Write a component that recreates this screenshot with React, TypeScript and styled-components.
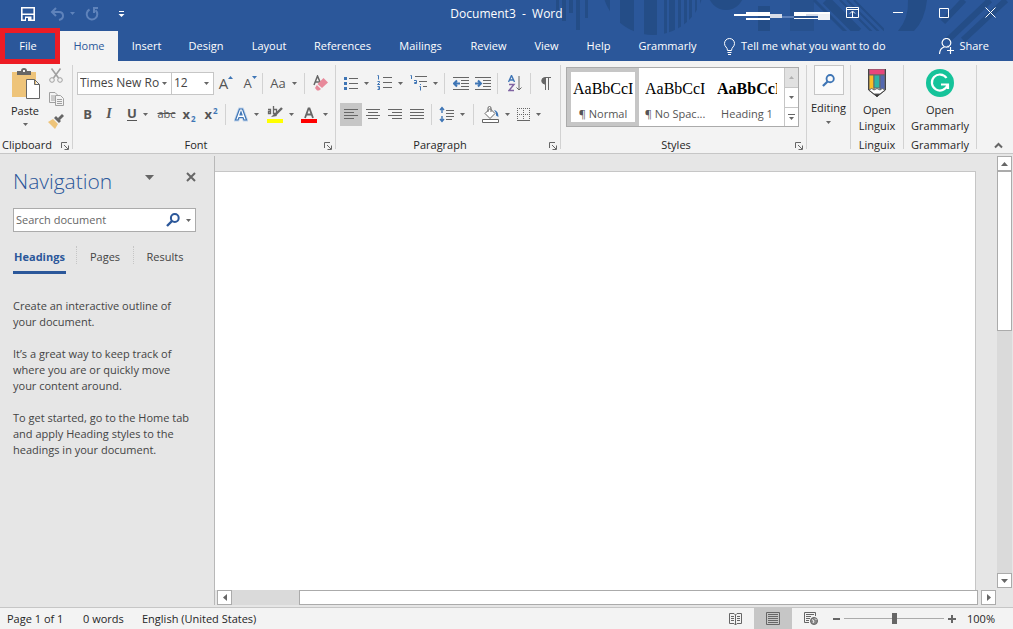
import React from "react";
import styled, { createGlobalStyle, css } from "styled-components";

const Global = createGlobalStyle`
  * { box-sizing: border-box; }
  body { margin: 0; font: 11px/16px "Open Sans", "Noto Sans", sans-serif; color: #262626; background: #e6e6e6; }
  button, input, select { font: inherit; color: inherit; }
  button { border: 0; background: none; padding: 0; cursor: pointer; }
  h1, h2, p { margin: 0; font-weight: 400; }
  svg { display: block; flex: none; }
`;

const BLUE = "#2b579a";
const GREY = "#666";
const ACCENT = "#3e75b5";

const Shell = styled.div`
  min-height: 100vh;
  display: flex;
  flex-direction: column;
`;

/* ---------- title bar and tabs ---------- */
const Header = styled.header`
  position: relative;
  background: ${BLUE};
  color: #fff;
`;
const Pattern = styled.svg`
  position: absolute;
  top: 0;
  right: 0;
`;
const TitleBar = styled.div`
  position: relative;
  height: 31px;
  display: grid;
  grid-template-columns: 1fr auto 1fr;
  align-items: center;
  padding-bottom: 4px;
`;
const QuickAccess = styled.div`
  display: flex;
  align-items: center;
  padding-left: 21px;
`;
const QuickButton = styled.button<{ $w: number; $dim?: boolean }>`
  width: ${(p) => p.$w}px;
  height: 24px;
  display: flex;
  align-items: center;
  gap: 5px;
  color: ${(p) => (p.$dim ? "#5f83bb" : "#fff")};
`;
const Title = styled.h1`
  font-size: 12px;
  white-space: pre;
`;
const WindowControls = styled.div`
  display: flex;
  justify-content: flex-end;
  align-items: center;
  padding-bottom: 2px;
`;
const WindowButton = styled.button`
  width: 46px;
  height: 24px;
  display: grid;
  place-items: center;
  color: #fff;
`;
const TabBar = styled.nav`
  position: relative;
  height: 30px;
  display: flex;
`;
const Tab = styled.button<{ $w: number; $active?: boolean }>`
  width: ${(p) => p.$w}px;
  text-align: center;
  white-space: nowrap;
  color: #fff;
  ${(p) => p.$active && css`background: #f3f3f3; color: ${BLUE};`}
`;
const FileTab = styled(Tab)`
  position: relative;
  padding-right: 4px;
  &::after {
    content: "";
    position: absolute;
    z-index: 2;
    inset: -3px 0 -3px 0;
    border: 5px solid #ed1c24;
  }
`;
const TabAction = styled.button`
  display: flex;
  align-items: center;
  gap: 5px;
  color: #fff;
  padding-left: 12px;
  white-space: nowrap;
`;
const Share = styled(TabAction)`
  margin-left: auto;
  padding-right: 24px;
`;

/* ---------- ribbon ---------- */
const Ribbon = styled.div`
  height: 93px;
  display: flex;
  background: #f3f3f3;
  border-bottom: 1px solid #c6c6c6;
`;
const Group = styled.section<{ $w: number; $pad?: number }>`
  position: relative;
  width: ${(p) => p.$w}px;
  padding-left: ${(p) => p.$pad ?? 0}px;
  padding-right: 1px;
  display: flex;
  flex-direction: column;
  &::after {
    content: "";
    position: absolute;
    right: 0;
    top: 4px;
    bottom: 4px;
    width: 1px;
    background: #d2d2d2;
  }
`;
const GroupBody = styled.div`
  flex: 1;
  display: flex;
  flex-direction: column;
`;
const Tools = styled(GroupBody)`
  padding-top: 11px;
  gap: 9px;
`;
const GroupLabel = styled.div<{ $pad?: number }>`
  height: 16px;
  display: flex;
  align-items: center;
  justify-content: center;
  padding-right: ${(p) => p.$pad ?? 0}px;
`;
const LauncherButton = styled.button`
  position: absolute;
  right: 4px;
  bottom: 3px;
`;
const ToolRow = styled.div`
  display: flex;
  align-items: center;
  height: 22px;
`;
const Tool = styled.button<{ $w: number; $on?: boolean }>`
  width: ${(p) => p.$w}px;
  height: 23px;
  display: flex;
  align-items: center;
  justify-content: center;
  gap: 6px;
  color: #555;
  background: ${(p) => (p.$on ? "#c6c6c6" : "transparent")};
`;
const SmallTool = styled(Tool)`
  height: 15px;
`;
const Rule = styled.span<{ $m?: number }>`
  width: 1px;
  height: 21px;
  margin: 0 ${(p) => p.$m ?? 0}px;
  background: #d2d2d2;
`;
const Combo = styled.label<{ $w: number }>`
  width: ${(p) => p.$w}px;
  height: 23px;
  display: flex;
  align-items: center;
  padding-right: 4px;
  background: #fff;
  border: 1px solid #c6c6c6;
  font-size: 12px;
  & + & { border-left: 0; }
  select {
    flex: 1;
    min-width: 0;
    appearance: none;
    border: 0;
    padding: 0 0 0 2px;
    background: none;
    color: #444;
    outline: 0;
  }
`;
const Letter = styled.span<{ $size?: number; $bold?: boolean }>`
  font-size: ${(p) => p.$size ?? 13}px;
  font-weight: ${(p) => (p.$bold ? 700 : 400)};
  line-height: 16px;
`;
const ItalicLetter = styled(Letter)`
  font-family: "Liberation Serif", serif;
  font-style: italic;
  font-weight: 700;
`;
const UnderLetter = styled(Letter)`
  border-bottom: 1px solid #555;
  line-height: 13px;
`;
const Struck = styled.s`
  font-size: 11px;
`;
const Script = styled.span<{ $up?: boolean }>`
  color: ${ACCENT};
  font-size: 8px;
  line-height: 8px;
  font-weight: 700;
  align-self: ${(p) => (p.$up ? "flex-start" : "flex-end")};
  margin: 4px 0 3px -5px;
`;
const SizeMark = styled.span`
  align-self: flex-start;
  margin: 4px 0 0 -6px;
`;
const Clipboard = styled.div`
  flex: 1;
  display: flex;
  padding-top: 7px;
`;
const PasteButton = styled.button`
  width: 48px;
  display: flex;
  flex-direction: column;
  align-items: center;
  gap: 4px;
  padding-left: 2px;
`;
const ClipTools = styled.div`
  display: flex;
  flex-direction: column;
  gap: 8px;
`;
const Gallery = styled.div`
  display: flex;
  width: 233px;
  height: 60px;
  margin-top: 6px;
  background: #fff;
  border: 1px solid #ababab;
`;
const StyleItem = styled.button<{ $on?: boolean }>`
  width: 72px;
  display: flex;
  flex-direction: column;
  align-items: center;
  justify-content: space-between;
  padding-top: 7px;
  border: 4px solid ${(p) => (p.$on ? "#c6c6c6" : "transparent")};
  white-space: nowrap;
  color: #555;
`;
const Sample = styled.span<{ $bold?: boolean }>`
  width: 60px;
  overflow: hidden;
  font-family: "Liberation Serif", serif;
  font-size: 16px;
  line-height: 20px;
  color: #000;
  font-weight: ${(p) => (p.$bold ? 700 : 400)};
`;
const GalleryArrows = styled.div`
  margin-left: auto;
  width: 14px;
  display: grid;
  grid-template-rows: 1fr 1fr 1fr;
  border-left: 1px solid #c6c6c6;
`;
const GalleryArrow = styled.button<{ $off?: boolean }>`
  display: grid;
  place-items: center;
  background: ${(p) => (p.$off ? "#e1e1e1" : "#fff")};
  & + & { border-top: 1px solid #c6c6c6; }
`;
const BigButton = styled.button<{ $top: number }>`
  padding-top: ${(p) => p.$top}px;
  display: flex;
  flex-direction: column;
  align-items: center;
  gap: 5px;
  white-space: nowrap;
`;
const IconBox = styled.span`
  width: 30px;
  height: 30px;
  display: grid;
  place-items: center;
  background: #fafafa;
  border: 1px solid #c6c6c6;
`;
const Collapse = styled.button`
  margin: auto 10px 4px auto;
`;

/* ---------- workspace ---------- */
const Workspace = styled.main`
  flex: 1;
  display: flex;
`;
const NavPane = styled.aside`
  width: 215px;
  margin: 2px 0;
  padding: 11px 18px 0 13px;
  border-right: 1px solid #b8b8b8;
  color: #444;
`;
const NavHead = styled.div`
  display: flex;
  align-items: flex-start;
  height: 41px;
`;
const NavTitle = styled.h2`
  flex: 1;
  font-size: 21px;
  line-height: 28px;
  font-weight: 300;
  color: ${BLUE};
`;
const NavButton = styled.button<{ $gap?: number }>`
  height: 10px;
  display: grid;
  place-items: center;
  margin: 5px ${(p) => p.$gap ?? 0}px 0 0;
`;
const SearchBox = styled.label`
  height: 24px;
  display: flex;
  align-items: center;
  gap: 6px;
  padding-right: 4px;
  background: #fff;
  border: 1px solid #ababab;
  input {
    flex: 1;
    min-width: 0;
    border: 0;
    padding: 0 2px;
    outline: 0;
    background: none;
  }
  input::placeholder { color: #666; opacity: 1; }
`;
const NavTabs = styled.div`
  display: flex;
  margin-top: 14px;
  height: 28px;
`;
const NavTab = styled.button<{ $w: number; $on?: boolean }>`
  width: ${(p) => p.$w}px;
  padding-bottom: 3px;
  white-space: nowrap;
  text-align: center;
  border-bottom: 3px solid ${(p) => (p.$on ? BLUE : "transparent")};
  color: ${(p) => (p.$on ? BLUE : "#444")};
  font-weight: ${(p) => (p.$on ? 700 : 400)};
  &:first-child { margin-right: 10px; }
`;
const Dotted = styled.span`
  height: 18px;
  border-left: 1px dotted #c6c6c6;
`;
const Help = styled.div`
  display: flex;
  flex-direction: column;
  gap: 16px;
  margin-top: 24px;
  white-space: nowrap;
`;
const Canvas = styled.div`
  flex: 1;
  display: grid;
  grid-template-columns: 1fr 16px;
  grid-template-rows: 1fr 17px;
`;
const Sheet = styled.article`
  margin: 17px 21px 0 0;
  background: #fff;
  border: 1px solid #c6c6c6;
  border-width: 1px 1px 0 0;
`;
const VScroll = styled.div`
  display: flex;
  flex-direction: column;
  width: 15px;
  margin: 2px 0;
  background: #dadada;
`;
const VThumb = styled.div`
  flex: 0 0 37%;
  background: #fff;
  border: 1px solid #ababab;
  margin-bottom: auto;
`;
const HScroll = styled.div`
  display: flex;
  height: 15px;
  margin: 0 1px 0 2px;
`;
const HTrack = styled.div`
  flex: 1;
  display: flex;
  margin-right: 3px;
  background: #dadada;
`;
const HThumb = styled.div`
  width: 91%;
  margin-left: auto;
  background: #fff;
  border: 1px solid #ababab;
`;
const ScrollButton = styled.button`
  width: 15px;
  height: 15px;
  display: grid;
  place-items: center;
  background: #fff;
  border: 1px solid #ababab;
`;

/* ---------- status bar ---------- */
const Status = styled.footer`
  height: 22px;
  display: flex;
  align-items: center;
  background: #f3f3f3;
  border-top: 1px solid #c6c6c6;
`;
const StatusItem = styled.button<{ $w: number }>`
  width: ${(p) => p.$w}px;
  text-align: left;
  white-space: nowrap;
`;
const ViewButton = styled.button<{ $on?: boolean }>`
  width: 38px;
  height: 21px;
  display: grid;
  place-items: center;
  background: ${(p) => (p.$on ? "#c6c6c6" : "transparent")};
`;
const StatusLeft = styled.div`
  flex: 1;
  display: flex;
  padding-left: 7px;
`;
const ZoomOutButton = styled.button`
  margin-left: 3px;
`;
const ZoomRange = styled.input`
  width: 100px;
  height: 12px;
  margin: 0 4px;
  appearance: none;
  background: linear-gradient(#ababab, #ababab) center / 100% 1px no-repeat;
  &::-webkit-slider-thumb {
    appearance: none;
    width: 5px;
    height: 11px;
    background: ${GREY};
  }
`;
const ZoomValue = styled.output`
  margin: 0 18px 0 11px;
`;

/* ---------- icons ---------- */
type CaretProps = { up?: boolean; w?: number; color?: string };
const Caret = ({ up = false, w = 5, color = GREY }: CaretProps) => (
  <svg width={w} height={(w + 1) / 2} viewBox="0 0 10 6" preserveAspectRatio="none">
    <path d={up ? "M0 6L5 0L10 6Z" : "M0 0H10L5 6Z"} fill={color} />
  </svg>
);
type IconProps = { w: number; h: number; children: React.ReactNode };
const Icon = ({ w, h, children }: IconProps) => (
  <svg width={w} height={h} viewBox={`0 0 ${w} ${h}`} fill="none" stroke={GREY}>
    {children}
  </svg>
);
const Lines = ({ rows }: { rows: [number, number][] }) => (
  <Icon w={14} h={11}>
    {[...rows].map(([a, b], i) => (
      <path key={i} d={`M${a} ${i * 3 + 0.5}H${b}`} />
    ))}
  </Icon>
);
const Launcher = ({ name }: { name: string }) => (
  <LauncherButton aria-label={`${name} settings`}>
    <Icon w={8} h={8}>
      <path d="M.5 6V.5H6M3 3L7 7M7.5 3.5V7.5H3.5" />
    </Icon>
  </LauncherButton>
);
const SearchIcon = ({ size, color }: { size: number; color: string }) => (
  <svg width={size} height={size} viewBox="0 0 14 14" fill="none" stroke={color} strokeWidth="2">
    <circle cx="8.8" cy="5" r="3.9" />
    <path d="M6 8L1 13" strokeWidth="2.4" />
  </svg>
);

const HeaderPattern = () => (
  <Pattern width="463" height="44" viewBox="550 0 463 44" fill="#244d87" aria-hidden>
    <defs>
      <clipPath id="disc"><circle cx="653" cy="-16" r="51" /></clipPath>
      <clipPath id="block"><path d="M758 0H884V31H758Z" /></clipPath>
    </defs>
    <path d="M556 0h3v10h-3zM562 0h4v21h-4zM569 0h4v13h-4zM576 0h4v30h-4zM585 0h3v18h-3z" />
    <path clipPath="url(#disc)" d="M602 0h8v40h-8zM620 0h14v40h-14zM644 0h13v40h-13zM664 0h3v40h-3zM669 0h6v40h-6zM678 0h3v40h-3zM684 0h3v40h-3zM689 0h3v40h-3zM695 0h2v40h-2zM700 0h3v40h-3z" />
    <circle cx="726" cy="-8" r="18" />
    <path d="M758 6h12v25h-12z" />
    <path d="M790 0h24v31h-24z" opacity=".6" />
    <g clipPath="url(#block)" stroke="#244d87" fill="none">
      <path d="M826 0L858 32" strokeWidth="9" />
      <path d="M840 0L872 32M847 0L879 32M854 0L886 32" strokeWidth="2" />
      <path d="M814 0L846 32" strokeWidth="3" />
    </g>
    <path d="M908 0H927Q925 20 914 31H898Q909 18 908 0Z" />
    <path d="M964 0L943 22M990 0L948 40M1006 0L963 40" stroke="#244d87" strokeWidth="6" />
    <g stroke="none">
      <path d="M734 14h36v2h-36zM746 12h24v2h-24zM746 18h24v2h-24zM794 12h36v2h-12v2h-24zM794 18h36v1h-36z" fill="#fff" />
      <path d="M770 14h12v4h-12zM806 14h24v2h-24z" fill="#d8dde8" />
      <path d="M818 14h12v6h-12z" fill="#eef1f6" />
      <path d="M782 16h12v2h-12z" fill="#5c7fb8" />
    </g>
  </Pattern>
);

const tabs: [string, number][] = [
  ["Insert", 57], ["Design", 62], ["Layout", 64], ["References", 83], ["Mailings", 73],
  ["Review", 63], ["View", 53], ["Help", 51], ["Grammarly", 87],
];

export default function App() {
  return (
    <Shell>
      <Global />
      <Header>
        <HeaderPattern />
        <TitleBar>
          <QuickAccess>
            <QuickButton $w={29} aria-label="Save">
              <Icon w={14} h={14}>
                <path d="M.8 .8H13.200V13.200H.8Z" stroke="#fff" strokeWidth="1.600" />
                <path d="M1 6.500H13V8H1ZM4 9.500H10.500V14H4Z" fill="#fff" stroke="none" />
                <path d="M5 11h2v3h-2z" fill={BLUE} stroke="none" />
              </Icon>
            </QuickButton>
            <QuickButton $w={35} $dim aria-label="Undo">
              <svg width="15" height="14" viewBox="0 0 15 14" fill="none" stroke="currentColor" strokeWidth="2">
                <path d="M6 1L2 5L6 9M2 5H9Q13 5 13 9Q13 12 9 13" />
              </svg>
              <Caret color="currentColor" />
            </QuickButton>
            <QuickButton $w={33} $dim aria-label="Repeat">
              <svg width="15" height="14" viewBox="0 0 15 14" fill="none" stroke="currentColor" strokeWidth="2">
                <path d="M4.500 2.500A5.300 5.300 0 1 0 10.500 3.200M8 1H13M9 1V6" />
              </svg>
            </QuickButton>
            <QuickButton $w={16} aria-label="Customize toolbar">
              <Icon w={7} h={6}>
                <path d="M1 .5H6" stroke="#fff" />
                <path d="M0.500 3H6.500L3.500 6Z" fill="#fff" stroke="none" />
              </Icon>
            </QuickButton>
          </QuickAccess>
          <Title>{"Document3  -  Word"}</Title>
          <WindowControls>
            <WindowButton aria-label="Ribbon display options">
              <Icon w={13} h={11}>
                <path d="M.5 .5H12.5V10.500H.5ZM.5 2.500H12.500M6.500 10V4.500M4 6.500L6.500 4L9 6.500" stroke="#fff" />
              </Icon>
            </WindowButton>
            <WindowButton aria-label="Minimize">
              <Icon w={10} h={1}><path d="M0 .5H10" stroke="#fff" /></Icon>
            </WindowButton>
            <WindowButton aria-label="Maximize">
              <Icon w={10} h={10}><path d="M.5 .5H9.500V9.500H.5Z" stroke="#fff" /></Icon>
            </WindowButton>
            <WindowButton aria-label="Close">
              <Icon w={11} h={11}><path d="M.5 .5L10.500 10.500M10.500 .5L.5 10.500" stroke="#fff" /></Icon>
            </WindowButton>
          </WindowControls>
        </TitleBar>
        <TabBar>
          <FileTab $w={60}>File</FileTab>
          <Tab $w={58} $active>Home</Tab>
          {tabs.map(([name, w]) => (
            <Tab key={name} $w={w}>{name}</Tab>
          ))}
          <TabAction>
            <Icon w={13} h={17}>
              <path d="M4.500 12.500C4.500 9 1.500 9 1.500 5.500A5 5 0 0 1 11.500 5.500C11.500 9 8.500 9 8.500 12.500ZM4.500 14.500H8.500M5 16.500H8" stroke="#fff" />
            </Icon>
            Tell me what you want to do
          </TabAction>
          <Share>
            <Icon w={15} h={16}>
              <path d="M7.500 .5A4.300 4.300 0 1 1 7.400 .5ZM.5 16Q.8 10.500 5 9M10 9L8.500 8M8 12.500H15M11.500 9V16" stroke="#fff" strokeWidth="1.200" />
            </Icon>
            Share
          </Share>
        </TabBar>
      </Header>

      <Ribbon>
        <Group $w={73}>
          <Clipboard>
            <PasteButton>
              <Icon w={29} h={31}>
                <path d="M1 4H25V29H1Z" fill="#eec47a" stroke="none" />
                <path d="M6 7V3H10Q10 0 13 0Q16 0 16 3H20V7Z" fill="#666" stroke="none" />
                <path d="M12 2h2v2h-2z" fill="#f3f3f3" stroke="none" />
                <path d="M15.500 11.500H23.500L28.500 16.500V30.500H15.500ZM23.500 11.500V16.500H28.500" fill="#fff" />
              </Icon>
              Paste
              <Caret />
            </PasteButton>
            <ClipTools>
              <SmallTool $w={16} aria-label="Cut">
                <Icon w={14} h={15}>
                  <g stroke="#a0a0a0"><path d="M2.500 .5L9.500 10M11.500 .5L4.500 10" strokeWidth="1.600" /><circle cx="3" cy="12" r="2.300" /><circle cx="11" cy="12" r="2.300" /></g>
                </Icon>
              </SmallTool>
              <SmallTool $w={16} aria-label="Copy">
                <Icon w={15} h={14}>
                  <g stroke="#a0a0a0" fill="#f3f3f3">
                    <path d="M.5 .5H6L8.500 3V10.500H.5ZM2 4H6M2 6H6M2 8H6" />
                    <path d="M6.500 3.500H11.500L14.500 6.500V13.500H6.500ZM8 7.500H13M8 9.500H13M8 11.500H13" />
                  </g>
                </Icon>
              </SmallTool>
              <SmallTool $w={16} aria-label="Format painter">
                <Icon w={16} h={15}>
                  <path d="M0 8L5 5L10 10L7 15Z" fill="#eec47a" stroke="none" />
                  <path d="M6 4L11 9L13 7L8 2ZM10 4L14 0L16 2L12 6Z" fill={GREY} stroke="none" />
                </Icon>
              </SmallTool>
            </ClipTools>
          </Clipboard>
          <GroupLabel $pad={18}>Clipboard</GroupLabel>
          <Launcher name="Clipboard" />
        </Group>

        <Group $w={263} $pad={4}>
          <Tools>
            <ToolRow>
              <Combo $w={95}>
                <select aria-label="Font"><option>Times New Ro</option></select>
                <Caret />
              </Combo>
              <Combo $w={42}>
                <select aria-label="Font size"><option>12</option></select>
                <Caret />
              </Combo>
              <Tool $w={24} aria-label="Grow font">
                <Letter $size={15}>A</Letter>
                <SizeMark><Caret up color={ACCENT} /></SizeMark>
              </Tool>
              <Tool $w={24} aria-label="Shrink font">
                <Letter $size={13}>A</Letter>
                <SizeMark><Caret color={ACCENT} /></SizeMark>
              </Tool>
              <Rule />
              <Tool $w={41} aria-label="Change case"><Letter>Aa</Letter><Caret /></Tool>
              <Rule />
              <Tool $w={30} aria-label="Clear formatting">
                <Icon w={15} h={16}>
                  <path d="M1 10L4.500 1L7.500 8M2.500 7H6.500" strokeWidth="1.500" />
                  <path d="M10.500 3L15 7.500L9 13L4.500 9Z" fill="#e8899a" stroke="none" />
                  <path d="M3.800 10L8 14L6 15.500H4L2 13Z" fill="#e8899a" stroke="none" />
                </Icon>
              </Tool>
            </ToolRow>
            <ToolRow>
              <Tool $w={21} aria-label="Bold"><Letter $bold>B</Letter></Tool>
              <Tool $w={22} aria-label="Italic"><ItalicLetter $size={14}>I</ItalicLetter></Tool>
              <Tool $w={35} aria-label="Underline"><UnderLetter $bold>U</UnderLetter><Caret /></Tool>
              <Tool $w={23} aria-label="Strikethrough"><Struck>abc</Struck></Tool>
              <Tool $w={22} aria-label="Subscript"><Letter $bold>x</Letter><Script>2</Script></Tool>
              <Tool $w={22} aria-label="Superscript"><Letter $bold>x</Letter><Script $up>2</Script></Tool>
              <Rule $m={3} />
              <Tool $w={34} aria-label="Text effects">
                <Icon w={14} h={15}>
                  <path d="M1.500 13L5.500 2H8.500L12.500 13H10L9 10.500H5L4 13ZM6 8H8L7 5Z" fill="#fff" stroke="#c3d6ec" strokeWidth="3" />
                  <path d="M1.500 13L5.500 2H8.500L12.500 13H10L9 10.500H5L4 13ZM6 8H8L7 5Z" fill="#fff" stroke={ACCENT} strokeWidth="1.200" />
                </Icon>
                <Caret />
              </Tool>
              <Tool $w={34} aria-label="Highlight">
                <Icon w={16} h={17}>
                  <path d="M1 3.500H3.500V7.500H1.500V5.500H3.500M6.500 0V7.500H9.500V3.500H6.500" strokeWidth="1.300" />
                  <path d="M15 2L8 9" strokeWidth="2.400" />
                  <path d="M8 7L10 10L4 11Z" fill={GREY} stroke="none" />
                  <path d="M0 13h16v4h-16z" fill="#ff0" stroke="none" />
                </Icon>
                <Caret />
              </Tool>
              <Tool $w={34} aria-label="Font color">
                <Icon w={16} h={17}>
                  <path d="M4 12L7.500 2.500H8.500L12 12M5.500 8.500H10.500" strokeWidth="1.800" />
                  <path d="M0 13h16v4h-16z" fill="#f00" stroke="none" />
                </Icon>
                <Caret />
              </Tool>
            </ToolRow>
          </Tools>
          <GroupLabel $pad={20}>Font</GroupLabel>
          <Launcher name="Font" />
        </Group>

        <Group $w={225} $pad={4}>
          <Tools>
            <ToolRow>
              <Tool $w={33} aria-label="Bullets">
                <Icon w={14} h={15}>
                  <path d="M5 2.500H14M5 7.500H14M5 12.500H14" />
                  <path d="M0 1h3v3h-3zM0 6h3v3h-3zM0 11h3v3h-3z" fill={ACCENT} stroke="none" />
                </Icon>
                <Caret />
              </Tool>
              <Tool $w={34} aria-label="Numbering">
                <Icon w={15} h={16}>
                  <path d="M6 2.500H15M6 7.500H15M6 12.500H15" />
                  <path d="M.5 .5H1.500V4.500M.5 6.500H2.500V7.500L.5 9.500H3M.5 11.500H2.500V14.500H.5M1 13H2.500" stroke={ACCENT} />
                </Icon>
                <Caret />
              </Tool>
              <Tool $w={33} aria-label="Multilevel list">
                <Icon w={17} h={16}>
                  <path d="M5 1.500H17M9 6.500H17M13 11.500H17" />
                  <path d="M.5 .5H1.500V4M4 5.500H6.500V8.500H4.500V7.500H6M10.500 9V10M9.500 11.500H10.500V15.500" stroke={ACCENT} />
                </Icon>
                <Caret />
              </Tool>
              <Rule $m={4} />
              <Tool $w={23} aria-label="Decrease indent">
                <Icon w={16} h={13}>
                  <path d="M0 .5H16M8 3.500H16M8 6.500H16M8 9.500H16M0 12.500H16" />
                  <path d="M7 6.500H1M4 3.500L1 6.500L4 9.500" stroke={ACCENT} strokeWidth="2" />
                </Icon>
              </Tool>
              <Tool $w={22} aria-label="Increase indent">
                <Icon w={16} h={13}>
                  <path d="M0 .5H16M8 3.500H16M8 6.500H16M8 9.500H16M0 12.500H16" />
                  <path d="M0 6.500H6M3 3.500L6 6.500L3 9.500" stroke={ACCENT} strokeWidth="2" />
                </Icon>
              </Tool>
              <Rule $m={3} />
              <Tool $w={27} aria-label="Sort">
                <Icon w={14} h={17}>
                  <path d="M.5 7L3.500 .5L6.500 7M1.500 5H5.500" stroke={ACCENT} strokeWidth="1.400" />
                  <path d="M1 9.500H6L1 15.500H6" stroke="#8064a2" strokeWidth="1.400" />
                  <path d="M11 1V15M8.500 12.500L11 15L13.500 12.500" />
                </Icon>
              </Tool>
              <Rule $m={2} />
              <Tool $w={24} aria-label="Show formatting marks">
                <Icon w={11} h={13}>
                  <path d="M5.500 7V.5H4.500A3.300 3.300 0 0 0 4.500 7Z" fill={GREY} />
                  <path d="M5.500 0V13M8.500 0V13M5 .5H11" />
                </Icon>
              </Tool>
            </ToolRow>
            <ToolRow>
              <Tool $w={22} $on aria-label="Align left"><Lines rows={[[0, 14], [0, 10], [0, 14], [0, 10]]} /></Tool>
              <Tool $w={22} aria-label="Center"><Lines rows={[[0, 14], [2, 12], [0, 14], [2, 12]]} /></Tool>
              <Tool $w={22} aria-label="Align right"><Lines rows={[[0, 14], [4, 14], [0, 14], [4, 14]]} /></Tool>
              <Tool $w={22} aria-label="Justify"><Lines rows={[[0, 14], [0, 14], [0, 14], [0, 14]]} /></Tool>
              <Rule $m={3} />
              <Tool $w={34} aria-label="Line spacing">
                <Icon w={15} h={17}>
                  <path d="M7 4.500H15M7 7.500H15M7 10.500H15M7 13.500H13" />
                  <path d="M3 1V7M1 4L3 1.500L5 4M3 10V16M1 13L3 15.500L5 13" stroke={ACCENT} strokeWidth="1.400" />
                </Icon>
                <Caret />
              </Tool>
              <Rule $m={4} />
              <Tool $w={35} aria-label="Shading">
                <Icon w={17} h={17}>
                  <path d="M8 2.500L13 7.500L8 12.500L3 7.500ZM6 6V2Q6 .5 7.500 .5T9 2V6" fill="#fff" />
                  <path d="M12 4Q16.500 5 16.500 11L14 9.500V7Z" fill={ACCENT} stroke="none" />
                  <path d="M.5 13.500H16.500V16.500H.5Z" fill="#fff" />
                </Icon>
                <Caret />
              </Tool>
              <Tool $w={32} aria-label="Borders">
                <Icon w={13} h={13}>
                  <path d="M0 .5H13M.5 0V13M12.500 0V13M0 6.500H13M6.500 0V13" strokeDasharray="1 1" />
                  <path d="M0 12.500H13" />
                </Icon>
                <Caret />
              </Tool>
            </ToolRow>
          </Tools>
          <GroupLabel $pad={20}>Paragraph</GroupLabel>
          <Launcher name="Paragraph" />
        </Group>

        <Group $w={246} $pad={5}>
          <GroupBody>
            <Gallery>
              <StyleItem $on><Sample>AaBbCcI</Sample>¶ Normal</StyleItem>
              <StyleItem><Sample>AaBbCcI</Sample>¶ No Spac...</StyleItem>
              <StyleItem><Sample $bold>AaBbCcI</Sample>Heading 1</StyleItem>
              <GalleryArrows>
                <GalleryArrow $off aria-label="Previous styles"><Caret up color="#b0b0b0" /></GalleryArrow>
                <GalleryArrow aria-label="Next styles"><Caret /></GalleryArrow>
                <GalleryArrow aria-label="More styles">
                  <Icon w={7} h={6}>
                    <path d="M0 .5H7" />
                    <path d="M1 3H6L3.500 6Z" fill={GREY} stroke="none" />
                  </Icon>
                </GalleryArrow>
              </GalleryArrows>
            </Gallery>
          </GroupBody>
          <GroupLabel $pad={20}>Styles</GroupLabel>
          <Launcher name="Styles" />
        </Group>

        <Group $w={44}>
          <BigButton $top={4}>
            <IconBox><SearchIcon size={13} color={ACCENT} /></IconBox>
            Editing
            <Caret />
          </BigButton>
        </Group>
        <Group $w={53}>
          <GroupBody>
            <BigButton $top={8}>
              <Icon w={18} h={28}>
                <path d="M1 0H17V6H1Z" fill="#e8467c" />
                <path d="M1 6H6V21H1Z" fill="#fbbf24" />
                <path d="M6 6H12V19H6Z" fill="#2fb5a5" />
                <path d="M12 6H17V21H12Z" fill="#5468b0" />
                <path d="M1 21Q4 18 6 21Q9 18 12 21Q14 18 17 21L11 26H7Z" fill="#fff" />
                <path d="M6 25H12L9 28Z" fill="#333" />
                <path d="M.5 0V21L9 27.500L17.500 21V0" stroke="#444" />
              </Icon>
              <span>Open<br />Linguix</span>
            </BigButton>
          </GroupBody>
          <GroupLabel>Linguix</GroupLabel>
        </Group>
        <Group $w={73}>
          <GroupBody>
            <BigButton $top={8}>
              <Icon w={28} h={28}>
                <circle cx="14" cy="14" r="14" fill="#15c39a" stroke="none" />
                <path d="M20.500 9A8 8 0 1 0 21.500 16M15 15.500H22V20" stroke="#fff" strokeWidth="2.200" />
              </Icon>
              <span>Open<br />Grammarly</span>
            </BigButton>
          </GroupBody>
          <GroupLabel>Grammarly</GroupLabel>
        </Group>
        <Collapse aria-label="Collapse ribbon">
          <Icon w={9} h={7}><path d="M1 5.500L4.500 2L8 5.500" strokeWidth="2" /></Icon>
        </Collapse>
      </Ribbon>

      <Workspace>
        <NavPane>
          <NavHead>
            <NavTitle>Navigation</NavTitle>
            <NavButton $gap={32} aria-label="Pane options"><Caret w={9} /></NavButton>
            <NavButton aria-label="Close pane">
              <Icon w={10} h={10}><path d="M1 1L9 9M9 1L1 9" strokeWidth="2" /></Icon>
            </NavButton>
          </NavHead>
          <SearchBox>
            <input placeholder="Search document" aria-label="Search document" />
            <SearchIcon size={14} color={BLUE} />
            <Caret />
          </SearchBox>
          <NavTabs>
            <NavTab $w={53} $on>Headings</NavTab>
            <Dotted />
            <NavTab $w={56}>Pages</NavTab>
            <Dotted />
            <NavTab $w={62}>Results</NavTab>
          </NavTabs>
          <Help>
            <p>Create an interactive outline of<br />your document.</p>
            <p>It’s a great way to keep track of<br />where you are or quickly move<br />your content around.</p>
            <p>To get started, go to the Home tab<br />and apply Heading styles to the<br />headings in your document.</p>
          </Help>
        </NavPane>
        <Canvas>
          <Sheet />
          <VScroll>
            <ScrollButton aria-label="Scroll up"><Caret up w={7} /></ScrollButton>
            <VThumb />
            <ScrollButton aria-label="Scroll down"><Caret w={7} /></ScrollButton>
          </VScroll>
          <HScroll>
            <ScrollButton aria-label="Scroll left">
              <Icon w={4} h={7}><path d="M4 0V7L0 3.500Z" fill={GREY} stroke="none" /></Icon>
            </ScrollButton>
            <HTrack><HThumb /></HTrack>
            <ScrollButton aria-label="Scroll right">
              <Icon w={4} h={7}><path d="M0 0V7L4 3.500Z" fill={GREY} stroke="none" /></Icon>
            </ScrollButton>
          </HScroll>
        </Canvas>
      </Workspace>

      <Status>
        <StatusLeft>
          <StatusItem $w={76}>Page 1 of 1</StatusItem>
          <StatusItem $w={59}>0 words</StatusItem>
          <StatusItem $w={120}>English (United States)</StatusItem>
        </StatusLeft>
        <ViewButton aria-label="Read mode">
          <Icon w={13} h={12}>
            <path d="M.5 .5H5L6.500 2L8 .5H12.500V10.500H8L6.500 12L5 10.500H.5ZM6.500 2V12M2 3.500H5M2 5.500H5M2 7.500H5M8 3.500H11M8 5.500H11M8 7.500H11" />
          </Icon>
        </ViewButton>
        <ViewButton $on aria-label="Print layout">
          <Icon w={14} h={13}>
            <path d="M.5 .5H13.500V12.500H.5ZM2 2.500H12M2 4.500H12M2 6.500H12M2 8.500H12M2 10.500H12" />
          </Icon>
        </ViewButton>
        <ViewButton aria-label="Web layout">
          <Icon w={14} h={13}>
            <path d="M5 10.500H.5V.5H11.500V4M2 2.500H10M2 4.500H7M2 6.500H6M2 8.500H5" />
            <circle cx="10" cy="9" r="3.500" fill="#888" />
            <path d="M8 7.500L10 9L9 11M11 6.500L12.500 8" stroke="#f3f3f3" />
          </Icon>
        </ViewButton>
        <ZoomOutButton aria-label="Zoom out">
          <Icon w={7} h={2}><path d="M0 1H7" strokeWidth="2" /></Icon>
        </ZoomOutButton>
        <ZoomRange type="range" aria-label="Zoom" min={0} max={100} defaultValue={50} />
        <button aria-label="Zoom in">
          <Icon w={8} h={8}><path d="M0 4H8M4 0V8" strokeWidth="2" /></Icon>
        </button>
        <ZoomValue>100%</ZoomValue>
      </Status>
    </Shell>
  );
}
